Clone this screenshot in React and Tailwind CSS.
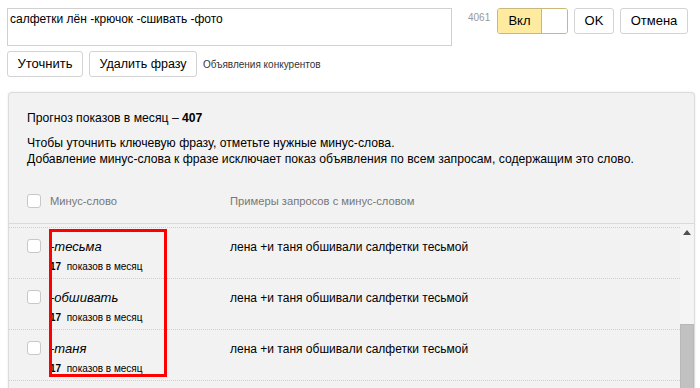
import React from "react";

const rows = ["-тесьма", "-обшивать", "-таня"];

function Box() {
  return <div className="w-[14px] h-[14px] shrink-0 rounded-[3px] border border-[#c8c8c8] bg-white" />;
}

export default function App() {
  return (
    <div className="w-[700px] h-[388px] bg-white overflow-hidden relative text-[#000]" style={{ fontFamily: '"Liberation Sans", Arial, sans-serif' }}>
      {/* top row */}
      <div className="flex items-start pt-[8px] pl-[7px]">
        <div className="w-[445px] h-[38px] border border-[#d0d0d0] px-[2px] text-[12px] leading-[18px] pt-[1px]">
          салфетки лён -крючок -сшивать -фото
        </div>
        <div className="ml-[16px] text-[10px] text-[#999] leading-[14px] pt-[3px] w-[29px]">4061</div>
        <div className="flex h-[26px] rounded-[3px] border border-[#c9b77b] overflow-hidden">
          <div className="w-[44px] bg-[#ffeba0] flex items-center justify-center text-[13px] border-r border-[#c9b77b]">Вкл</div>
          <div className="w-[25px] bg-white" />
        </div>
        <button className="ml-[6px] w-[40px] h-[26px] rounded-[3px] border border-[#d3d3d3] bg-white text-[13px]">OK</button>
        <button className="ml-[6px] w-[68px] h-[26px] rounded-[3px] border border-[#d3d3d3] bg-white text-[13px]">Отмена</button>
      </div>
      {/* second row */}
      <div className="flex items-center pl-[7px] mt-[5px] h-[26px]">
        <button className="w-[76px] h-[26px] rounded-[3px] border border-[#d3d3d3] bg-white text-[13px]">Уточнить</button>
        <button className="ml-[6px] w-[108px] h-[26px] rounded-[3px] border border-[#d3d3d3] bg-white text-[12.5px]">Удалить фразу</button>
        <span className="ml-[6px] text-[10px] text-[#333]">Объявления конкурентов</span>
      </div>
      {/* panel */}
      <div className="ml-[8px] mt-[15px] w-[687px] h-[320px] bg-[#f2f2f2] border border-[#dcdcdc] rounded-t-[4px] shadow-[0_0_2px_rgba(0,0,0,0.12)] flex flex-col">
        <div className="pl-[18px] pt-[17px] text-[12.2px] leading-[16px] h-[33px]">
          Прогноз показов в месяц – <b>407</b>
        </div>
        <div className="pl-[18px] mt-[9px] text-[12.2px] leading-[16px]">
          Чтобы уточнить ключевую фразу, отметьте нужные минус-слова.<br />
          Добавление минус-слова к фразе исключает показ объявления по всем запросам, содержащим это слово.
        </div>
        <div className="flex items-center pl-[18px] mt-[26px] h-[16px] text-[11.2px] text-[#777]">
          <Box />
          <span className="ml-[9px] w-[180px]">Минус-слово</span>
          <span>Примеры запросов с минус-словом</span>
        </div>
        <div className="mt-[14px] border-t border-[#dadada] flex-1 flex relative">
          <div className="flex-1 pt-[3px]">
            <div className="border-t border-dotted border-[#cfcfcf]" />
            {rows.map((w) => (
              <div key={w} className="h-[51px] border-b border-dotted border-[#cfcfcf] flex pl-[18px] pt-[11px]">
                <Box />
                <div className="ml-[9px] w-[180px]">
                  <div className="italic text-[13px] leading-[16px]">{w}</div>
                  <div className="text-[10px] leading-[12px] mt-[6px]"><b className="text-[10px]">17</b>&nbsp; показов в месяц</div>
                </div>
                <div className="text-[12px] leading-[16px]">лена +и таня обшивали салфетки тесьмой</div>
              </div>
            ))}
          </div>
          <div className="w-[14px] bg-[#f4f4f4] flex flex-col items-center">
            <div className="mt-[6px] w-0 h-0 border-l-[4px] border-r-[4px] border-b-[5px] border-l-transparent border-r-transparent border-b-[#505050]" />
            <div className="mt-[89px] w-[14px] flex-1 bg-[#c1c1c1] border border-[#b8b8b8]" />
          </div>
          <div className="absolute left-[40px] top-[5px] w-[118px] h-[148px] border-[3px] border-[#ff0000]" />
        </div>
      </div>
    </div>
  );
}
